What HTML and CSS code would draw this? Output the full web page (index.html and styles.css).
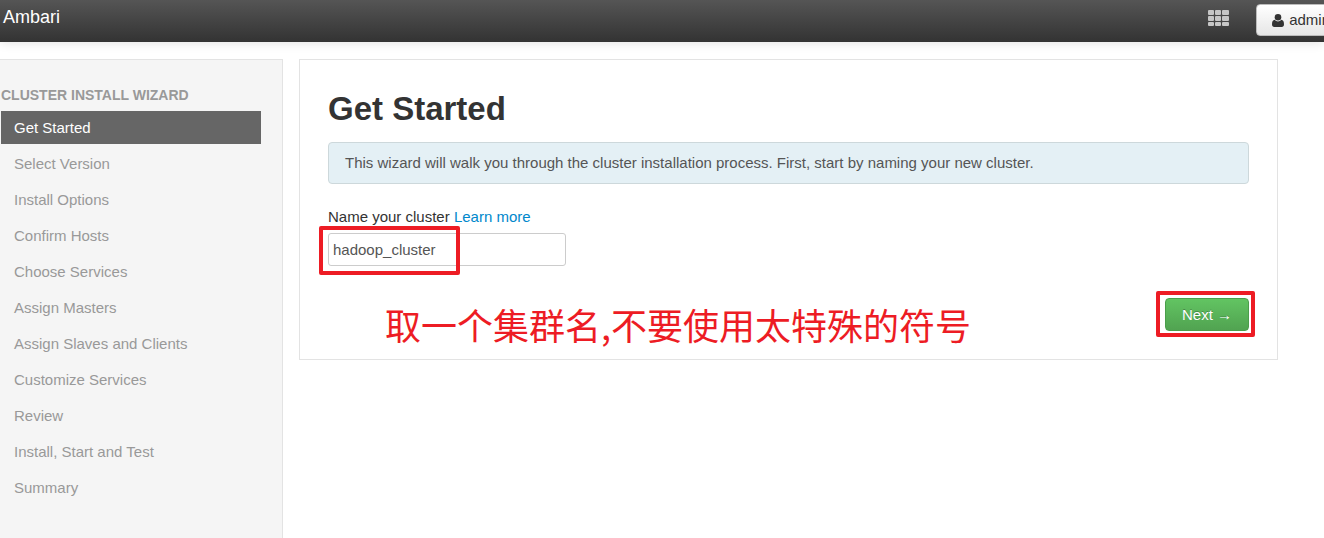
FILE: index.html
```html
<!DOCTYPE html>
<html lang="en">
<head>
<meta charset="utf-8">
<title>Ambari</title>
<link rel="stylesheet" href="styles.css">
</head>
<body>
<header class="navbar">
  <a class="brand" href="#">Ambari</a>
  <div class="nav-tools">
    <button class="views" type="button" aria-label="Views">
      <svg width="21" height="17" viewBox="0 0 21 17" fill="#c6c6c6" aria-hidden="true">
        <rect x="0" y="0" width="6" height="5" rx="1"/><rect x="7" y="0" width="6" height="5" rx="1"/><rect x="14" y="0" width="7" height="5" rx="1"/>
        <rect x="0" y="6" width="6" height="5" rx="1"/><rect x="7" y="6" width="6" height="5" rx="1"/><rect x="14" y="6" width="7" height="5" rx="1"/>
        <rect x="0" y="12" width="6" height="4" rx="1"/><rect x="7" y="12" width="6" height="4" rx="1"/><rect x="14" y="12" width="7" height="4" rx="1"/>
      </svg>
    </button>
    <button class="user" type="button">
      <svg width="12" height="13" viewBox="0 0 12 13" fill="#333" aria-hidden="true">
        <path d="M2.8 5.8C3.6 7 4.7 7.5 6 7.5S8.400 7 9.200 5.800C11.200 6 12 7.700 12 10.300C12 12 11.200 13 9.700 13H2.300C.8 13 0 12 0 10.300C0 7.700 .8 6 2.800 5.800Z"/>
        <circle cx="6" cy="3.300" r="3.300"/>
      </svg>
      <span>admin</span>
    </button>
  </div>
</header>
<div class="layout">
  <nav class="sidebar" aria-label="Cluster install wizard">
    <h2 class="nav-header">Cluster Install Wizard</h2>
    <ul class="steps">
      <li><a class="step active" href="#">Get Started</a></li>
      <li><a class="step" href="#">Select Version</a></li>
      <li><a class="step" href="#">Install Options</a></li>
      <li><a class="step" href="#">Confirm Hosts</a></li>
      <li><a class="step" href="#">Choose Services</a></li>
      <li><a class="step" href="#">Assign Masters</a></li>
      <li><a class="step" href="#">Assign Slaves and Clients</a></li>
      <li><a class="step" href="#">Customize Services</a></li>
      <li><a class="step" href="#">Review</a></li>
      <li><a class="step" href="#">Install, Start and Test</a></li>
      <li><a class="step" href="#">Summary</a></li>
    </ul>
  </nav>
  <main class="panel">
    <h1 class="title">Get Started</h1>
    <p class="info">This wizard will walk you through the cluster installation process. First, start by naming your new cluster.</p>
    <div class="label-row"><label for="cluster">Name your cluster</label> <a class="learn" href="#">Learn more</a></div>
    <div class="field">
      <input class="text" id="cluster" type="text" value="hadoop_cluster">
      <span class="mark mark-input"></span>
    </div>
    <div class="actions">
      <p class="note" lang="zh-CN">取一个集群名,不要使用太特殊的符号</p>
      <div class="next-wrap">
        <button class="next" type="button">Next →</button>
        <span class="mark mark-next"></span>
      </div>
    </div>
  </main>
</div>
</body>
</html>
```
FILE: styles.css
```css
* { box-sizing: border-box; }
html, body { height: 100%; }
body {
  margin: 0;
  display: flex;
  flex-direction: column;
  overflow: hidden;
  background: #fff;
  color: #333;
  font: 15px/20px "Liberation Sans", Arial, sans-serif;
}
a { text-decoration: none; }
button, input { font: inherit; }

.navbar {
  flex: none;
  display: flex;
  justify-content: space-between;
  height: 42px;
  padding-left: 3px;
  background: linear-gradient(#555, #333);
  box-shadow: 0 1px 10px rgba(0, 0, 0, .12);
}
.brand {
  padding-top: 7px;
  color: #fff;
  font-size: 18px;
}
.nav-tools {
  display: flex;
  align-items: flex-start;
  gap: 27px;
  margin-right: -21px;
}
.views {
  display: flex;
  padding: 10px 0 0;
  border: 0;
  background: none;
}
.user {
  display: flex;
  align-items: center;
  gap: 5px;
  height: 32px;
  margin-top: 4px;
  padding: 0 14px 0 15px;
  border: 1px solid #bbb;
  border-radius: 4px;
  background: linear-gradient(#fff, #e6e6e6);
  color: #333;
}

.layout {
  flex: 1;
  display: flex;
  align-items: flex-start;
  gap: 16px;
  padding: 17px 46px 0 0;
}
.sidebar {
  flex: none;
  align-self: stretch;
  width: 283px;
  padding: 25px 21px 0 1px;
  border: 1px solid #e3e3e3;
  border-width: 1px 1px 0 0;
  background: #f5f5f5;
}
.nav-header {
  margin: 0 0 6px;
  color: #999;
  font-size: 14px;
  line-height: 20px;
  text-transform: uppercase;
}
.steps {
  display: grid;
  gap: 3px;
  margin: 0;
  padding: 0;
  list-style: none;
}
.step {
  display: block;
  padding: 7px 13px 6px;
  color: #999;
}
.active {
  background: #666;
  color: #fff;
}

.panel {
  flex: 1;
  padding: 28px;
  border: 1px solid #e3e3e3;
}
.title {
  margin: 0 0 12px;
  font-size: 33px;
  line-height: 42px;
}
.info {
  margin: 0 0 23px;
  padding: 10px 16px;
  border: 1px solid #cdd8db;
  border-radius: 4px;
  background: #e4f0f5;
  color: #555;
}
.label-row { margin-bottom: 6px; }
.learn { color: #08c; }
.field {
  position: relative;
  width: 238px;
}
.text {
  display: block;
  width: 100%;
  height: 33px;
  padding: 0 4px;
  border: 1px solid #ccc;
  border-radius: 3px;
  background: #fff;
  color: #555;
}
.mark {
  position: absolute;
  border: 4px solid #ed1c24;
  border-radius: 2px;
  pointer-events: none;
}
.mark-input { left: -9px; top: -7px; width: 141px; height: 49px; }
.mark-next { inset: -7px -6px -6px -9px; }

.actions {
  display: flex;
  justify-content: space-between;
  align-items: flex-start;
  margin-top: 32px;
}
.note {
  margin: 6px 0 -13px 57px;
  color: #ed1c24;
  font: 36px/40px "Noto Sans CJK SC", sans-serif;
}
.next-wrap { position: relative; }
.next {
  display: block;
  height: 33px;
  padding: 0 16px;
  border: 1px solid #4b9e4b;
  border-radius: 4px;
  background: linear-gradient(#62c462, #51a351);
  color: #fff;
  text-shadow: 0 -1px 0 rgba(0, 0, 0, .25);
}
```
